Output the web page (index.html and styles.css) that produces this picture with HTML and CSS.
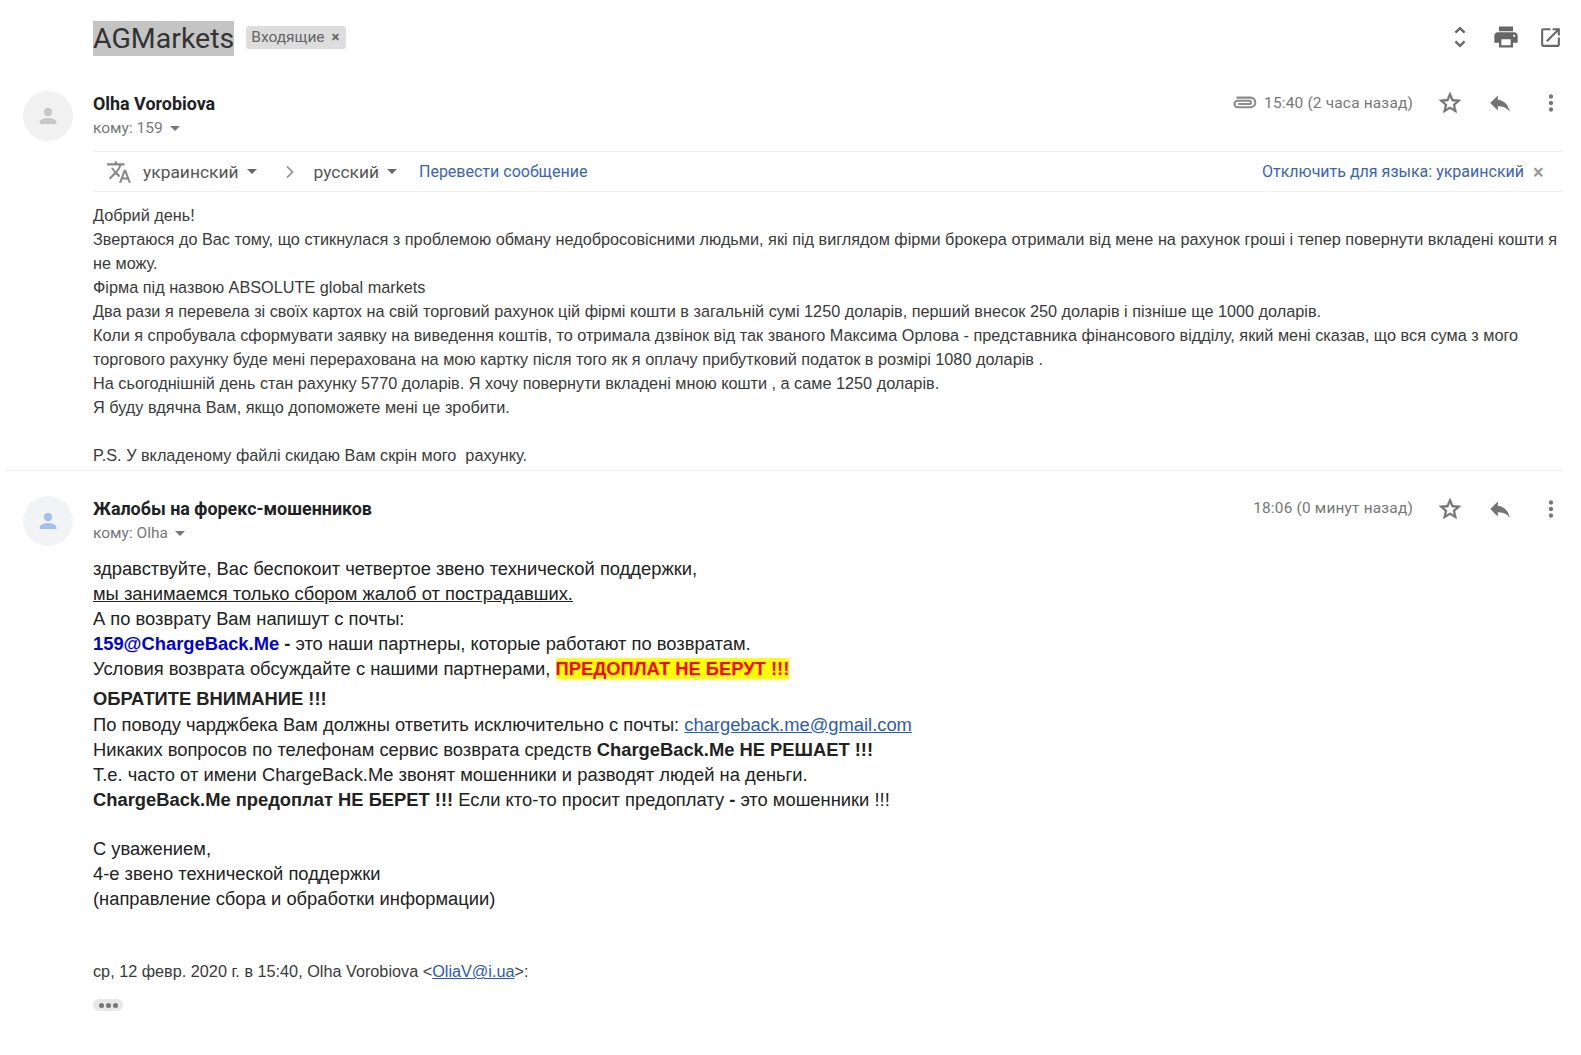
FILE: index.html
```html
<!DOCTYPE html>
<html lang="ru">
<head>
<meta charset="utf-8">
<title>AGMarkets</title>
<link rel="stylesheet" href="styles.css">
</head>
<body>
<svg class="defs" width="0" height="0" aria-hidden="true">
  <defs>
    <symbol id="i-star" viewBox="0 0 24 24"><path d="M22 9.24l-7.19-.62L12 2 9.19 8.63 2 9.24l5.46 4.73L5.82 21 12 17.27 18.18 21l-1.63-7.03L22 9.24zM12 15.4l-3.76 2.27 1-4.28-3.32-2.88 4.38-.38L12 6.1l1.71 4.04 4.38.38-3.32 2.88 1 4.28L12 15.4z"/></symbol>
    <symbol id="i-reply" viewBox="0 0 24 24"><path d="M10 9V5l-7 7 7 7v-4.1c5 0 8.5 1.6 11 5.1-1-5-4-10-11-11z"/></symbol>
    <symbol id="i-more" viewBox="0 0 24 24"><path d="M12 8c1.1 0 2-.9 2-2s-.9-2-2-2-2 .9-2 2 .9 2 2 2zm0 2c-1.1 0-2 .9-2 2s.9 2 2 2 2-.9 2-2-.9-2-2-2zm0 6c-1.1 0-2 .9-2 2s.9 2 2 2 2-.9 2-2-.9-2-2-2z"/></symbol>
    <symbol id="i-person" viewBox="0 0 24 24"><circle cx="12" cy="8" r="4.2"/><path d="M3.6 20v-1.6c0-2.8 5.5-4.3 8.4-4.3s8.4 1.500 8.400 4.300V20z"/></symbol>
  </defs>
</svg>

<main class="thread">
  <header class="subject">
    <h1 class="subject-title">AGMarkets</h1>
    <span class="label">Входящие <span class="label-x">×</span></span>
    <div class="subject-tools">
      <svg class="tool" viewBox="0 0 24 24"><path d="M12 5.830 15.170 9l1.410-1.410L12 3 7.410 7.590 8.830 9 12 5.830zm0 12.340L8.830 15l-1.410 1.410L12 21l4.590-4.590L15.170 15 12 18.170z"/></svg>
      <svg class="tool" viewBox="0 0 24 24"><path d="M19 8H5c-1.660 0-3 1.340-3 3v6h4v4h12v-4h4v-6c0-1.660-1.340-3-3-3zm-3 11H8v-5h8v5zm3-7c-.55 0-1-.45-1-1s.45-1 1-1 1 .45 1 1-.45 1-1 1zm-1-9H6v4h12V3z"/></svg>
      <svg class="tool external" viewBox="0 0 24 24"><path d="M19 19H5V5h7V3H5c-1.110 0-2 .9-2 2v14c0 1.100.89 2 2 2h14c1.100 0 2-.9 2-2v-7h-2v7zM14 3v2h3.590l-9.830 9.830 1.410 1.410L19 6.410V10h2V3h-7z"/></svg>
    </div>
  </header>

  <article class="message first">
    <div class="avatar"><svg class="avatar-icon grey" viewBox="0 0 24 24"><use href="#i-person"/></svg></div>
    <div class="content">
      <div class="meta">
        <div class="who">
          <div class="sender">Olha Vorobiova</div>
          <div class="to">кому: 159 <span class="caret small"></span></div>
        </div>
        <div class="actions">
          <svg class="clip" viewBox="0 0 26 14"><path d="M7 1.500h13a4.500 4.500 0 0 1 0 9H8a3 3 0 0 1 0-6h11a1.500 1.500 0 0 1 0 3H8.500" fill="none" stroke="#8a8a8a" stroke-width="1.900"/></svg>
          <span class="time">15:40 (2 часа назад)</span>
          <svg class="act star" viewBox="0 0 24 24"><use href="#i-star"/></svg>
          <svg class="act reply" viewBox="0 0 24 24"><use href="#i-reply"/></svg>
          <svg class="act more" viewBox="0 0 24 24"><use href="#i-more"/></svg>
        </div>
      </div>
      <div class="translate">
        <svg class="tr-icon" viewBox="0 0 24 24"><path d="M12.870 15.070l-2.540-2.510.03-.03A17.520 17.520 0 0 0 14.070 6H17V4h-7V2H8v2H1v1.990h11.170C11.500 7.920 10.440 9.750 9 11.350 8.070 10.320 7.300 9.190 6.690 8h-2c.73 1.630 1.730 3.170 2.980 4.560l-5.090 5.020L4 19l5-5 3.110 3.110.76-2.040zM18.500 10h-2L12 22h2l1.120-3h4.750L21 22h2l-4.500-12zm-2.620 7l1.620-4.330L19.120 17h-3.240z"/></svg>
        <span class="lang">украинский</span><span class="caret"></span>
        <svg class="chev" viewBox="0 0 10 14"><path d="M2 1.500 7.500 7 2 12.500" fill="none" stroke="#8a8a8a" stroke-width="1.600"/></svg>
        <span class="lang">русский</span><span class="caret"></span>
        <a class="tr-link tr-go">Перевести сообщение</a>
        <a class="tr-link tr-off">Отключить для языка: украинский</a>
        <span class="tr-x">×</span>
      </div>
      <div class="body-small">
        <div>Добрий день!</div>
        <div>Звертаюся до Вас тому, що стикнулася з проблемою обману недобросовісними людьми, які під виглядом фірми брокера отримали від мене на рахунок гроші і тепер повернути вкладені кошти я не можу.</div>
        <div>Фірма під назвою ABSOLUTE global markets</div>
        <div>Два рази я перевела зі своїх картох на свій торговий рахунок цій фірмі кошти в загальній сумі 1250 доларів, перший внесок 250 доларів і пізніше ще 1000 доларів.</div>
        <div>Коли я спробувала сформувати заявку на виведення коштів, то отримала дзвінок від так званого Максима Орлова - представника фінансового відділу, який мені сказав, що вся сума з мого торгового рахунку буде мені перерахована на мою картку після того як я оплачу прибутковий податок в розмірі 1080 доларів .</div>
        <div>На сьогоднішній день стан рахунку 5770 доларів. Я хочу повернути вкладені мною кошти , а саме 1250 доларів.</div>
        <div>Я буду вдячна Вам, якщо допоможете мені це зробити.</div>
        <div class="blank"></div>
        <div>P.S. У вкладеному файлі скидаю Вам скрін мого&nbsp; рахунку.</div>
      </div>
    </div>
  </article>

  <article class="message second">
    <div class="avatar"><svg class="avatar-icon blue" viewBox="0 0 24 24"><use href="#i-person"/></svg></div>
    <div class="content">
      <div class="meta">
        <div class="who">
          <div class="sender">Жалобы на форекс-мошенников</div>
          <div class="to">кому: Olha <span class="caret small"></span></div>
        </div>
        <div class="actions">
          <span class="time">18:06 (0 минут назад)</span>
          <svg class="act star" viewBox="0 0 24 24"><use href="#i-star"/></svg>
          <svg class="act reply" viewBox="0 0 24 24"><use href="#i-reply"/></svg>
          <svg class="act more" viewBox="0 0 24 24"><use href="#i-more"/></svg>
        </div>
      </div>
      <div class="body-large">
        <div>здравствуйте, Вас беспокоит четвертое звено технической поддержки,</div>
        <div class="under">мы занимаемся только сбором жалоб от пострадавших.</div>
        <div>А по возврату Вам напишут с почты:</div>
        <div><b class="blue-text">159@ChargeBack.Me</b> <b>-</b> это наши партнеры, которые работают по возвратам.</div>
        <div>Условия возврата обсуждайте с нашими партнерами, <b class="warn">ПРЕДОПЛАТ НЕ БЕРУТ !!!</b></div>
        <div class="gap"><b>ОБРАТИТЕ ВНИМАНИЕ !!!</b></div>
        <div>По поводу чарджбека Вам должны ответить исключительно с почты: <a class="mail">chargeback.me@gmail.com</a></div>
        <div>Никаких вопросов по телефонам сервис возврата средств <b>ChargeBack.Me НЕ РЕШАЕТ !!!</b></div>
        <div>Т.е. часто от имени ChargeBack.Me звонят мошенники и разводят людей на деньги.</div>
        <div><b>ChargeBack.Me предоплат НЕ БЕРЕТ !!!</b> Если кто-то просит предоплату <b>-</b> это мошенники !!!</div>
        <div class="sign">С уважением,</div>
        <div>4-е звено технической поддержки</div>
        <div>(направление сбора и обработки информации)</div>
      </div>
      <div class="quote">ср, 12 февр. 2020 г. в 15:40, Olha Vorobiova &lt;<a class="mail">OliaV@i.ua</a>&gt;:</div>
      <div class="dots"><i></i><i></i><i></i></div>
    </div>
  </article>
</main>
</body>
</html>
```
FILE: styles.css
```css
* { box-sizing: border-box; }
html, body { margin: 0; padding: 0; background: #fff; }
body { font-family: "Liberation Sans", Arial, sans-serif; color: #222; overflow: hidden; height: 1055px; }
.defs { position: absolute; }
.thread { width: 1581px; padding-right: 18px; }

.subject { display: flex; align-items: center; height: 82px; padding: 0 0 5px 93px; margin-right: -1px; }
.subject-title { margin: 0; font: 400 28.500px/35px Roboto, sans-serif; color: #333; background: #c4c4c4; }
.label { margin: 0 0 3px 12px; display: inline-flex; gap: 7px; align-items: center; height: 23px; padding: 0 6px 0 5px; background: #dddddd; border-radius: 3px; font: 15.500px Roboto, sans-serif; color: #666; }
.label-x { font-weight: 700; font-size: 15px; color: #666; }
.subject-tools { margin: 0 0 3px auto; display: flex; gap: 18px; align-items: center; }
.tool { width: 28px; height: 28px; fill: #666; }
.external { width: 25px; height: 25px; margin-right: 1px; }

.message { display: flex; }
.avatar { width: 93px; flex: none; padding: 9px 0 0 23px; }
.avatar > svg { display: block; width: 50px; height: 50px; padding: 13px; border-radius: 50%; background: #f1f1f1; }
.avatar-icon.grey { fill: #c8c8c8; }
.avatar-icon.blue { fill: #a4c1ee; }
.avatar .avatar-icon.blue { background: #f1f3f4; }
.content { flex: 1; min-width: 0; }

.meta { display: flex; justify-content: space-between; }
.who { padding-top: 10px; }
.sender { font: 700 17.900px/24px Roboto, sans-serif; color: #202124; }
.to { font: 15.500px/25px Roboto, sans-serif; color: #777; display: flex; align-items: center; gap: 7px; }
.caret { display: inline-block; width: 0; height: 0; border: 5px solid transparent; border-top-color: #666; border-bottom: 0; }
.caret.small { border-top-color: #777; }
.actions { display: flex; align-items: center; height: 42px; padding-top: 0; }
.time { font: 15.400px Roboto, sans-serif; color: #777; letter-spacing: .2px; }
.clip { width: 28px; height: 15px; margin-right: 7px; }
.act { width: 26px; height: 26px; fill: #737373; }
.star { margin-left: 24px; stroke: #737373; stroke-width: .5; }
.reply { margin-left: 24px; margin-right: 1px; }
.more { margin-left: 24px; margin-right: -1px; fill: #777; }

.translate { display: flex; align-items: center; height: 41px; margin-top: 10px; border-top: 1px solid #efefef; border-bottom: 1px solid #efefef; padding-left: 13px; font: 17.400px Roboto, sans-serif; color: #555; }
.tr-icon { width: 26px; height: 26px; fill: #888; margin-right: 11px; }
.lang { margin-right: 8px; }
.chev { width: 10px; height: 14px; margin: 0 19px 0 28px; }
.tr-link { color: #3a64b8; font-size: 16px; }
.tr-go { margin-left: 22px; }
.tr-off { margin-left: auto; margin-right: 3px; }
.tr-x { width: 36px; padding-left: 6px; font-weight: 700; font-size: 20px; color: #999; line-height: 1; }

.body-small { font-size: 16.250px; line-height: 24px; color: #3a3a3a; padding-top: 11px; }
.blank { height: 24px; }

.second { margin-top: 3px; border-top: 1px solid #eee; margin-left: 5px; }
.second .avatar { width: 88px; padding-left: 18px; padding-top: 25px; }
.second .who { padding-top: 26px; }
.second .actions { padding-top: 16px; height: 58px; }
.second .act { margin-top: 2px; }
.body-large { font-size: 18.350px; line-height: 25.100px; color: #222; padding-top: 10px; }
.under { text-decoration: underline; }
.blue-text { color: #0000e0; }
.warn { color: #f00; background: #ff0; }
.gap { margin-top: 5px; }
.sign { margin-top: 24px; }
.mail { color: #2a5db0; text-decoration: underline; }
.quote { margin-top: 48px; font-size: 16.240px; line-height: 24px; color: #3a3a3a; }
.dots { margin-top: 16px; display: inline-flex; gap: 2px; align-items: center; justify-content: center; width: 30px; height: 12px; background: #e8e8e8; border-radius: 6px; }
.dots i { width: 5px; height: 5px; border-radius: 50%; background: #777; }
```
